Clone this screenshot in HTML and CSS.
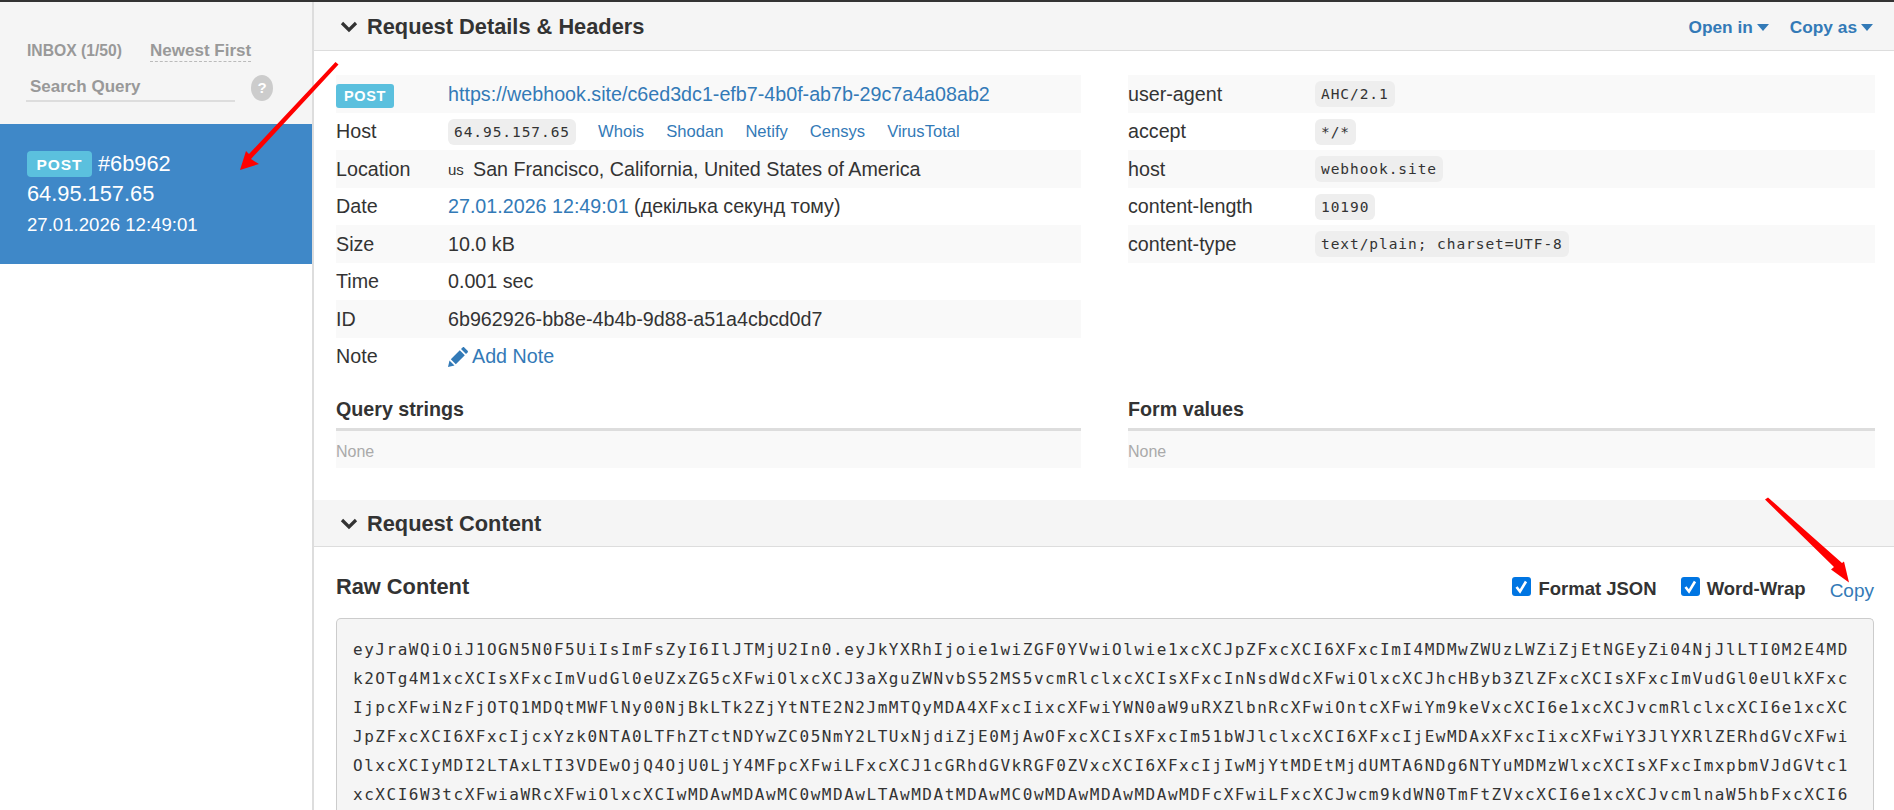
FILE: index.html
```html
<!DOCTYPE html>
<html lang="en">
<head>
<meta charset="utf-8">
<title>Webhook.site</title>
<link rel="stylesheet" href="styles.css">
</head>
<body>
<div class="topbar"></div>
<div class="app">
  <aside class="sidebar">
    <div class="side-top">
      <div class="side-head">
        <span class="inbox">INBOX (1/50)</span>
        <span class="sort">Newest First</span>
      </div>
      <div class="search">
        <span class="search-input">Search Query</span>
        <span class="help">?</span>
      </div>
    </div>
    <div class="req-item">
      <div class="req-first"><span class="label label-side">POST</span><span class="req-id">#6b962</span></div>
      <div class="req-ip">64.95.157.65</div>
      <div class="req-date">27.01.2026 12:49:01</div>
    </div>
  </aside>
  <main class="main">
    <header class="band band-first">
      <h2 class="band-title"><svg class="chev" viewBox="0 0 18 12"><path d="M2 2l7 7 7-7" fill="none" stroke="#333" stroke-width="3.2"/></svg>Request Details &amp; Headers</h2>
      <div class="band-actions">
        <a class="drop">Open in<i class="caret"></i></a>
        <a class="drop">Copy as<i class="caret"></i></a>
      </div>
    </header>
    <section class="details">
      <div class="col">
        <div class="table table-left">
          <div class="row"><span class="k"><span class="label label-table">POST</span></span><span class="v"><a>https://webhook.site/c6ed3dc1-efb7-4b0f-ab7b-29c7a4a08ab2</a></span></div>
          <div class="row"><span class="k">Host</span><span class="v"><code class="pill">64.95.157.65</code><span class="tools"><a>Whois</a><a>Shodan</a><a>Netify</a><a>Censys</a><a>VirusTotal</a></span></span></div>
          <div class="row"><span class="k">Location</span><span class="v"><span class="flag">us</span>San Francisco, California, United States of America</span></div>
          <div class="row"><span class="k">Date</span><span class="v"><a>27.01.2026 12:49:01</a> (декілька секунд тому)</span></div>
          <div class="row"><span class="k">Size</span><span class="v">10.0 kB</span></div>
          <div class="row"><span class="k">Time</span><span class="v">0.001 sec</span></div>
          <div class="row"><span class="k">ID</span><span class="v">6b962926-bb8e-4b4b-9d88-a51a4cbcd0d7</span></div>
          <div class="row"><span class="k">Note</span><span class="v"><a class="note"><svg class="pencil" viewBox="0 0 20 20"><path d="M0 20l1.500-6.500 5 5zM2.800 12.200l9-9 5 5-9 9zM13 2l1.600-1.600c.5-.5 1.200-.5 1.700 0l3.300 3.300c.5.500.5 1.200 0 1.700L18 7z" fill="#337ab7"/></svg>Add Note</a></span></div>
        </div>
        <h3 class="sub">Query strings</h3>
        <div class="none">None</div>
      </div>
      <div class="col">
        <div class="table table-right">
          <div class="row"><span class="k">user-agent</span><span class="v"><code class="pill">AHC/2.1</code></span></div>
          <div class="row"><span class="k">accept</span><span class="v"><code class="pill">*/*</code></span></div>
          <div class="row"><span class="k">host</span><span class="v"><code class="pill">webhook.site</code></span></div>
          <div class="row"><span class="k">content-length</span><span class="v"><code class="pill">10190</code></span></div>
          <div class="row"><span class="k">content-type</span><span class="v"><code class="pill">text/plain; charset=UTF-8</code></span></div>
        </div>
        <div class="spacer"></div>
        <h3 class="sub">Form values</h3>
        <div class="none">None</div>
      </div>
    </section>
    <header class="band band-second">
      <h2 class="band-title"><svg class="chev" viewBox="0 0 18 12"><path d="M2 2l7 7 7-7" fill="none" stroke="#333" stroke-width="3.2"/></svg>Request Content</h2>
    </header>
    <section class="content">
      <div class="content-head">
        <h3 class="raw">Raw Content</h3>
        <div class="opts">
          <label class="check"><svg class="box" viewBox="0 0 19 19"><rect width="19" height="19" rx="3" fill="#0075e2"/><path d="M4.500 10l3.500 4.500L14 4.500" fill="none" stroke="#fff" stroke-width="2.600"/></svg>Format JSON</label>
          <label class="check"><svg class="box" viewBox="0 0 19 19"><rect width="19" height="19" rx="3" fill="#0075e2"/><path d="M4.500 10l3.500 4.500L14 4.500" fill="none" stroke="#fff" stroke-width="2.600"/></svg>Word-Wrap</label>
          <a class="copy">Copy</a>
        </div>
      </div>
      <pre class="raw-body">eyJraWQiOiJ1OGN5N0F5UiIsImFsZyI6IlJTMjU2In0.eyJkYXRhIjoie1wiZGF0YVwiOlwie1xcXCJpZFxcXCI6XFxcImI4MDMwZWUzLWZiZjEtNGEyZi04NjJlLTI0M2E4MD
k2OTg4M1xcXCIsXFxcImVudGl0eUZxZG5cXFwiOlxcXCJ3aXguZWNvbS52MS5vcmRlclxcXCIsXFxcInNsdWdcXFwiOlxcXCJhcHByb3ZlZFxcXCIsXFxcImVudGl0eUlkXFxc
IjpcXFwiNzFjOTQ1MDQtMWFlNy00NjBkLTk2ZjYtNTE2N2JmMTQyMDA4XFxcIixcXFwiYWN0aW9uRXZlbnRcXFwiOntcXFwiYm9keVxcXCI6e1xcXCJvcmRlclxcXCI6e1xcXC
JpZFxcXCI6XFxcIjcxYzk0NTA0LTFhZTctNDYwZC05NmY2LTUxNjdiZjE0MjAwOFxcXCIsXFxcIm51bWJlclxcXCI6XFxcIjEwMDAxXFxcIixcXFwiY3JlYXRlZERhdGVcXFwi
OlxcXCIyMDI2LTAxLTI3VDEwOjQ4OjU0LjY4MFpcXFwiLFxcXCJ1cGRhdGVkRGF0ZVxcXCI6XFxcIjIwMjYtMDEtMjdUMTA6NDg6NTYuMDMzWlxcXCIsXFxcImxpbmVJdGVtc1
xcXCI6W3tcXFwiaWRcXFwiOlxcXCIwMDAwMDAwMC0wMDAwLTAwMDAtMDAwMC0wMDAwMDAwMDAwMDFcXFwiLFxcXCJwcm9kdWN0TmFtZVxcXCI6e1xcXCJvcmlnaW5hbFxcXCI6</pre>
    </section>
  </main>
</div>
<svg class="arrows" viewBox="0 0 1894 810">
  <path d="M335.500 62l3 2.500L251 159l8 5-19 6 6-19 3 3z" fill="#f00"/>
  <path d="M1765 499.500l3-2L1842 563l-0 0 2-1.500 5 21-18-13 3-2.500z" fill="#f00"/>
</svg>
</body>
</html>
```
FILE: styles.css
```css
* { box-sizing: border-box; }
html, body { margin: 0; height: 810px; overflow: hidden; }
body {
  font-family: "Liberation Sans", Arial, sans-serif;
  font-size: 19.700px;
  color: #333;
  background: #fff;
  position: relative;
}
a { color: #337ab7; text-decoration: none; }
h2, h3 { margin: 0; }

.topbar { height: 2px; background: #333; }
.app { display: flex; height: 808px; overflow: hidden; }

/* Sidebar */
.sidebar { width: 314px; flex: none; background: #fff; border-right: 2px solid #ddd; }
.side-top { height: 122px; padding: 38px 0 0 27px; background: #f5f5f5; font-weight: 700; color: #999; }
.side-head { display: flex; align-items: baseline; line-height: 22px; white-space: nowrap; font-size: 15.700px; }
.sort { margin-left: 28px; font-size: 17px; line-height: 20px; border-bottom: 1px dashed #bbb; }
.search { display: flex; align-items: center; margin: 12px 0 0 -1px; }
.search-input {
  width: 209px; height: 28px; padding-left: 4px;
  border-bottom: 2px solid #ddd;
  font-size: 17px; line-height: 26px;
}
.help {
  width: 22px; height: 26px; margin-left: 16px; border-radius: 50%;
  background: #ccc; color: #fff; font-size: 15px; line-height: 26px; text-align: center;
}
.req-item { height: 140px; background: #3f88c8; color: #fff; padding: 26px 0 0 27px; }
.req-first { display: flex; align-items: center; height: 28px; }
.label { display: inline-block; background: #5bc0de; color: #fff; font-weight: 700; border-radius: 4px; text-align: center; letter-spacing: 1px; }
.label-side { width: 65px; height: 26px; line-height: 27px; font-size: 15.500px; }
.req-id { font-size: 21.800px; margin-left: 6px; }
.req-ip { font-size: 21.800px; line-height: 32px; }
.req-date { font-size: 18.600px; line-height: 30px; }

/* Main */
.main { flex: 1; min-width: 0; }
.band {
  display: flex; align-items: center; justify-content: space-between;
  background: #f5f5f5; border-bottom: 1px solid #ddd;
}
.band-first { height: 49px; padding: 2px 21px 0 26px; }
.band-second { height: 47px; padding: 2px 20px 0 26px; margin-top: 32px; }
.band-title { display: flex; align-items: center; font-size: 21.800px; font-weight: 700; line-height: 28px; }
.chev { width: 18px; height: 12px; margin-right: 9px; }
.band-actions { display: flex; gap: 21px; font-weight: 700; font-size: 17.300px; }
.drop { display: flex; align-items: center; }
.caret { display: inline-block; width: 0; height: 0; margin-left: 4px; border-left: 6px solid transparent; border-right: 6px solid transparent; border-top: 7px solid #337ab7; }

.details { display: grid; grid-template-columns: 745px 747px; column-gap: 47px; padding: 24px 19px 0 22px; }
.col { display: flex; flex-direction: column; }
.table { display: flex; flex-direction: column; }
.row { display: flex; align-items: center; height: 37.500px; padding-top: 1px; white-space: nowrap; }
.row:nth-child(odd) { background: #f9f9f9; }
.table-left .k { width: 112px; flex: none; }
.table-right .k { width: 187px; flex: none; }
.k { display: flex; align-items: center; }
.v { display: flex; align-items: center; white-space: pre; }
.label-table { width: 58px; height: 24px; margin-top: 4px; font-size: 14.500px; line-height: 24px; letter-spacing: .6px; border-radius: 3px; }
.pill {
  display: inline-block; height: 26px; padding: 0 6px; border-radius: 6px; background: #eee;
  font-family: "DejaVu Sans Mono", monospace; font-size: 14.500px; letter-spacing: .94px; line-height: 27px; color: #333;
}
.tools { display: flex; gap: 22px; margin-left: 22px; font-size: 16.600px; }
.flag { font-size: 15px; width: 25px; }
.pencil { width: 20px; height: 20px; margin-right: 4px; }
.note { display: flex; align-items: center; }
.spacer { height: 112.500px; }
.sub { height: 56px; padding-top: 22px; font-size: 19.700px; line-height: 24px; border-bottom: 3px solid #ddd; }
.none { height: 37px; background: #f9f9f9; font-size: 16px; line-height: 41px; color: #aaa; }

.content { padding: 0 20px 0 22px; }
.content-head { display: flex; align-items: center; justify-content: space-between; height: 71px; padding-top: 9px; }
.raw { font-size: 21.800px; line-height: 28px; }
.opts { display: flex; align-items: center; }
.check { display: flex; align-items: center; margin-right: 24px; font-weight: 700; font-size: 18.500px; margin-top: 4px; }
.box { width: 19px; height: 19px; margin-right: 7px; margin-top: -6px; }
.copy { margin-top: 8px; font-size: 19px; }
.raw-body {
  margin: 0; height: 192px; padding: 16px 16px 0 16px; overflow: hidden;
  background: #f5f5f5; border: 1px solid #ccc; border-bottom: 0; border-radius: 5px 5px 0 0;
  font-family: "DejaVu Sans Mono", monospace; font-size: 16px; letter-spacing: 1.530px; line-height: 29px; color: #333;
}
.arrows { position: absolute; left: 0; top: 0; width: 1894px; height: 810px; pointer-events: none; }
```
